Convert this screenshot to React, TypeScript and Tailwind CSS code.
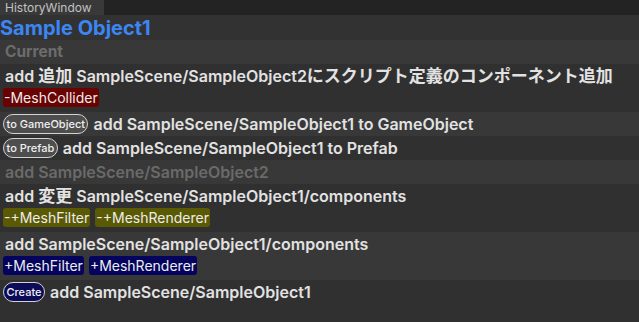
import React from 'react';

type Tone = 'red' | 'olive' | 'navy';

type Entry =
  | { kind: 'change'; text: React.ReactNode; badges: { label: string; tone: Tone }[] }
  | { kind: 'pill'; pill: string; pillTone: 'gray' | 'navy'; text: string }
  | { kind: 'muted'; text: string };

const badgeTone = {
  red: 'bg-[#6b0202]',
  olive: 'bg-[#5b5a04]',
  navy: 'bg-[#04045e]',
};

// Japanese glyphs render a touch wider than the Latin text around them
const Jp = ({ children }: { children: React.ReactNode }) => <span className="text-[17px]">{children}</span>;

const entries: Entry[] = [
  {
    kind: 'change',
    text: (
      <>
        add&nbsp;<Jp>追加</Jp>&nbsp;SampleScene/SampleObject2<Jp>にスクリプト定義のコンポーネント追加</Jp>
      </>
    ),
    badges: [{ label: '-MeshCollider', tone: 'red' }],
  },
  { kind: 'pill', pill: 'to GameObject', pillTone: 'gray', text: 'add SampleScene/SampleObject1 to GameObject' },
  { kind: 'pill', pill: 'to Prefab', pillTone: 'gray', text: 'add SampleScene/SampleObject1 to Prefab' },
  { kind: 'muted', text: 'add SampleScene/SampleObject2' },
  {
    kind: 'change',
    text: (
      <>
        add&nbsp;<Jp>変更</Jp>&nbsp;SampleScene/SampleObject1/components
      </>
    ),
    badges: [
      { label: '-+MeshFilter', tone: 'olive' },
      { label: '-+MeshRenderer', tone: 'olive' },
    ],
  },
  {
    kind: 'change',
    text: 'add SampleScene/SampleObject1/components',
    badges: [
      { label: '+MeshFilter', tone: 'navy' },
      { label: '+MeshRenderer', tone: 'navy' },
    ],
  },
  { kind: 'pill', pill: 'Create', pillTone: 'navy', text: 'add SampleScene/SampleObject1' },
];

const Badge = ({ label, tone }: { label: string; tone: Tone }) => (
  <span className={`inline-flex h-[19px] items-center rounded-[3px] px-[1px] text-[14px] leading-none text-[#ececec] ${badgeTone[tone]}`}>
    {label}
  </span>
);

const Pill = ({ label, tone }: { label: string; tone: 'gray' | 'navy' }) => (
  <span
    className={`inline-flex h-[20px] items-center rounded-full border border-[#d2d2d2] px-[2.5px] text-[11px] font-medium leading-none text-[#f0f0f0] ${
      tone === 'navy' ? 'bg-[#0b0b58]' : 'bg-[#4e4e4e]'
    }`}
  >
    {label}
  </span>
);

export default function App() {
  return (
    <div
      className="flex h-[322px] w-[639px] flex-col overflow-hidden bg-[#303030] text-[#e2e2e2]"
      style={{ fontFamily: 'Inter, "Noto Sans CJK JP", sans-serif' }}
    >
      {/* Tab bar */}
      <div className="flex h-[15px] shrink-0 bg-[#232323]">
        <div className="flex w-[104px] items-center bg-[#393939] pl-[5px] text-[12px] leading-none text-[#c2c2c2]">
          HistoryWindow
        </div>
      </div>

      {/* Header */}
      <div className="flex h-[25px] shrink-0 items-center bg-[#323232] text-[20px] font-bold leading-none text-[#3b86f2]">
        Sample Object1
      </div>

      <div className="flex h-[24px] shrink-0 items-center bg-[#383838] px-[5px] text-[15.5px] font-bold text-[#6c6c6c]">
        Current
      </div>

      {entries.map((e, i) => {
        const bg = i % 2 === 0 ? 'bg-[#303030]' : 'bg-[#383838]';
        if (e.kind === 'change') {
          return (
            <div key={i} className={`flex h-[48px] shrink-0 flex-col px-[3px] ${bg}`}>
              <div className="flex h-[24px] items-center whitespace-nowrap px-[2px] text-[16px] font-semibold leading-none">
                <span>{e.text}</span>
              </div>
              <div className="flex gap-[5px]">
                {e.badges.map(b => (
                  <Badge key={b.label} label={b.label} tone={b.tone} />
                ))}
              </div>
            </div>
          );
        }
        if (e.kind === 'pill') {
          return (
            <div key={i} className={`flex h-[24px] shrink-0 items-center gap-[5px] px-[3px] ${bg}`}>
              <Pill label={e.pill} tone={e.pillTone} />
              <span className="text-[16px] font-semibold">{e.text}</span>
            </div>
          );
        }
        return (
          <div key={i} className={`flex h-[24px] shrink-0 items-center px-[5px] text-[16px] font-semibold text-[#6a6a6a] ${bg}`}>
            {e.text}
          </div>
        );
      })}
      <div className="flex-1 bg-[#303030]" />
    </div>
  );
}
